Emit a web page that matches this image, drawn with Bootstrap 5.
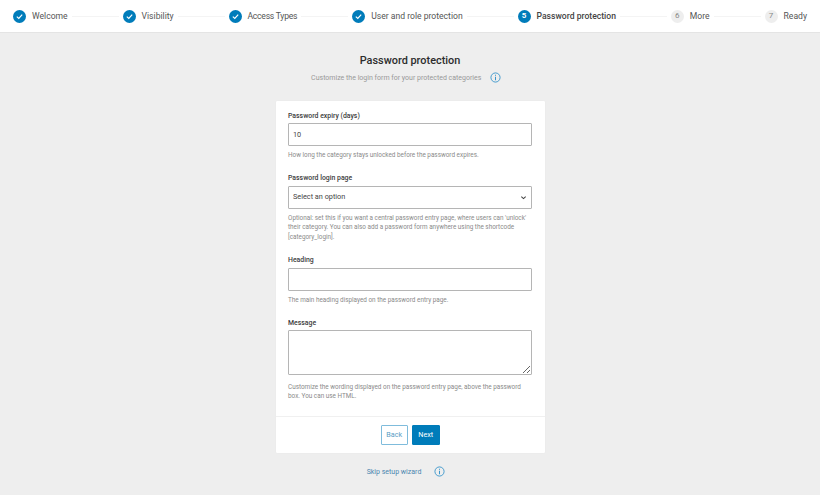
<!DOCTYPE html>
<html lang="en">
<head>
<meta charset="utf-8">
<title>Password protection</title>
<link href="https://cdn.jsdelivr.net/npm/bootstrap@5.3.0/dist/css/bootstrap.min.css" rel="stylesheet">
<style>
html,body{height:495px;overflow:hidden}
body{background:#eee;font-family:Roboto,"Open Sans","Liberation Sans",sans-serif;color:#444;font-size:7.2px}
.wiz-top{height:33px;background:#fff;border-bottom:1px solid #e4e4e4;padding:0 13px;font-size:8.6px;color:#555}
.wiz-dot{width:13px;height:13px;border-radius:50%;background:#007cba;color:#fff;font-size:8px;font-weight:700;flex:none;margin-right:6px}
.wiz-dot.todo{background:#eee;color:#888;font-weight:400}
.wiz-line{flex:1 1 0;height:1px;background:#f4f4f4;margin:0 4px}
.wiz-now{font-weight:500;color:#444}
.wiz-tight{letter-spacing:-.25px}
.wiz-title{font-size:10.9px;font-weight:500;color:#2c2c2c;margin:19.5px 0 0;line-height:15px}
.wiz-sub{color:#999;font-size:7px;line-height:12px;margin-top:4px;margin-bottom:17px;padding-right:8px}
.wiz-info{width:11px;height:11px;flex:none;margin-left:8.5px}
.wiz-card{width:269px;background:#fff;border:0;border-radius:1px;box-shadow:0 0 1px rgba(0,0,0,.08)}
.wiz-body{padding:10px 12.5px 14px}
.wiz-label{display:block;font-size:6.9px;font-weight:500;color:#3c3c3c;line-height:10px;margin-bottom:2.5px}
.wiz-input.form-control,.wiz-input.form-select{height:23px;min-height:0;border:1px solid #b5b5b5;border-radius:1px;font-size:7.3px;color:#444;padding:0 4px;line-height:20px}
.wiz-input.form-select{background-image:url("data:image/svg+xml,%3Csvg xmlns='http://www.w3.org/2000/svg' viewBox='0 0 8 8'%3E%3Cpath d='M1.5 3 4 5.2 6.5 3' fill='none' stroke='%23444' stroke-width='1.2'/%3E%3C/svg%3E");background-size:7px 7px;background-position:right 4px center;padding-right:14px}
.wiz-input.wiz-area{height:45px;margin-bottom:7.5px;resize:vertical}
.wiz-help{color:#8a8a8a;font-size:6.37px;line-height:9.5px;margin:5px 0 12.8px}
.wiz-foot{border-top:1px solid #f0f0f0;height:37px}
.wiz-btn{height:20px;width:27.5px;padding:0;font-size:7.2px;border-radius:1px;line-height:17px}
.wiz-back{border:1px solid #7fbcdc;color:#5a9dc4;background:#fff}
.wiz-next{border:1px solid #007cba;background:#007cba;color:#fff}
.wiz-skip{color:#4a86b0;font-size:7px;text-decoration:none}
.wiz-end{margin-top:12px;line-height:14px;padding-right:8px}
.wiz-end .wiz-info{margin-left:13px}
</style>
</head>
<body>
<header class="wiz-top d-flex align-items-center">
  <span class="wiz-dot d-flex align-items-center justify-content-center"><svg width="9" height="9" viewBox="0 0 10 10"><path d="M2 5.2 4.2 7.2 8 3" fill="none" stroke="#fff" stroke-width="1.3"/></svg></span><span>Welcome</span><span class="wiz-line"></span>
  <span class="wiz-dot d-flex align-items-center justify-content-center"><svg width="9" height="9" viewBox="0 0 10 10"><path d="M2 5.2 4.2 7.2 8 3" fill="none" stroke="#fff" stroke-width="1.3"/></svg></span><span>Visibility</span><span class="wiz-line"></span>
  <span class="wiz-dot d-flex align-items-center justify-content-center"><svg width="9" height="9" viewBox="0 0 10 10"><path d="M2 5.2 4.2 7.2 8 3" fill="none" stroke="#fff" stroke-width="1.3"/></svg></span><span class="wiz-tight">Access Types</span><span class="wiz-line"></span>
  <span class="wiz-dot d-flex align-items-center justify-content-center"><svg width="9" height="9" viewBox="0 0 10 10"><path d="M2 5.2 4.2 7.2 8 3" fill="none" stroke="#fff" stroke-width="1.3"/></svg></span><span>User and role protection</span><span class="wiz-line"></span>
  <span class="wiz-dot d-flex align-items-center justify-content-center">5</span><span class="wiz-now">Password protection</span><span class="wiz-line"></span>
  <span class="wiz-dot todo d-flex align-items-center justify-content-center">6</span><span>More</span><span class="wiz-line"></span>
  <span class="wiz-dot todo d-flex align-items-center justify-content-center">7</span><span>Ready</span>
</header>
<main class="d-flex flex-column align-items-center">
  <h1 class="wiz-title">Password protection</h1>
  <div class="wiz-sub d-flex align-items-center"><span>Customize the login form for your protected categories</span><svg class="wiz-info" viewBox="0 0 12 12"><circle cx="6" cy="6" r="5" fill="none" stroke="#3a96cc" stroke-width="1"/><path d="M6 5.2V9M6 3v1.2" stroke="#3a96cc" stroke-width="1.1"/></svg></div>
  <section class="card wiz-card">
    <div class="wiz-body">
      <label class="wiz-label" for="f1">Password expiry (days)</label>
      <input id="f1" class="form-control wiz-input" value="10">
      <p class="wiz-help">How long the category stays unlocked before the password expires.</p>
      <label class="wiz-label" for="f2">Password login page</label>
      <select id="f2" class="form-select wiz-input"><option>Select an option</option></select>
      <p class="wiz-help">Optional: set this if you want a central password entry page, where users can 'unlock' their category. You can also add a password form anywhere using the shortcode [category_login].</p>
      <label class="wiz-label" for="f3">Heading</label>
      <input id="f3" class="form-control wiz-input">
      <p class="wiz-help">The main heading displayed on the password entry page.</p>
      <label class="wiz-label" for="f4">Message</label>
      <textarea id="f4" class="form-control wiz-input wiz-area"></textarea>
      <p class="wiz-help mb-0">Customize the wording displayed on the password entry page, above the password box. You can use HTML.</p>
    </div>
    <div class="wiz-foot d-flex align-items-center justify-content-center gap-1">
      <button type="button" class="btn wiz-btn wiz-back">Back</button>
      <button type="button" class="btn wiz-btn wiz-next">Next</button>
    </div>
  </section>
  <div class="wiz-end d-flex align-items-center"><a class="wiz-skip" href="#">Skip setup wizard</a><svg class="wiz-info" viewBox="0 0 12 12"><circle cx="6" cy="6" r="5" fill="none" stroke="#3a96cc" stroke-width="1"/><path d="M6 5.2V9M6 3v1.2" stroke="#3a96cc" stroke-width="1.1"/></svg></div>
</main>
<script src="https://cdn.jsdelivr.net/npm/bootstrap@5.3.0/dist/js/bootstrap.bundle.min.js"></script>
</body>
</html>
